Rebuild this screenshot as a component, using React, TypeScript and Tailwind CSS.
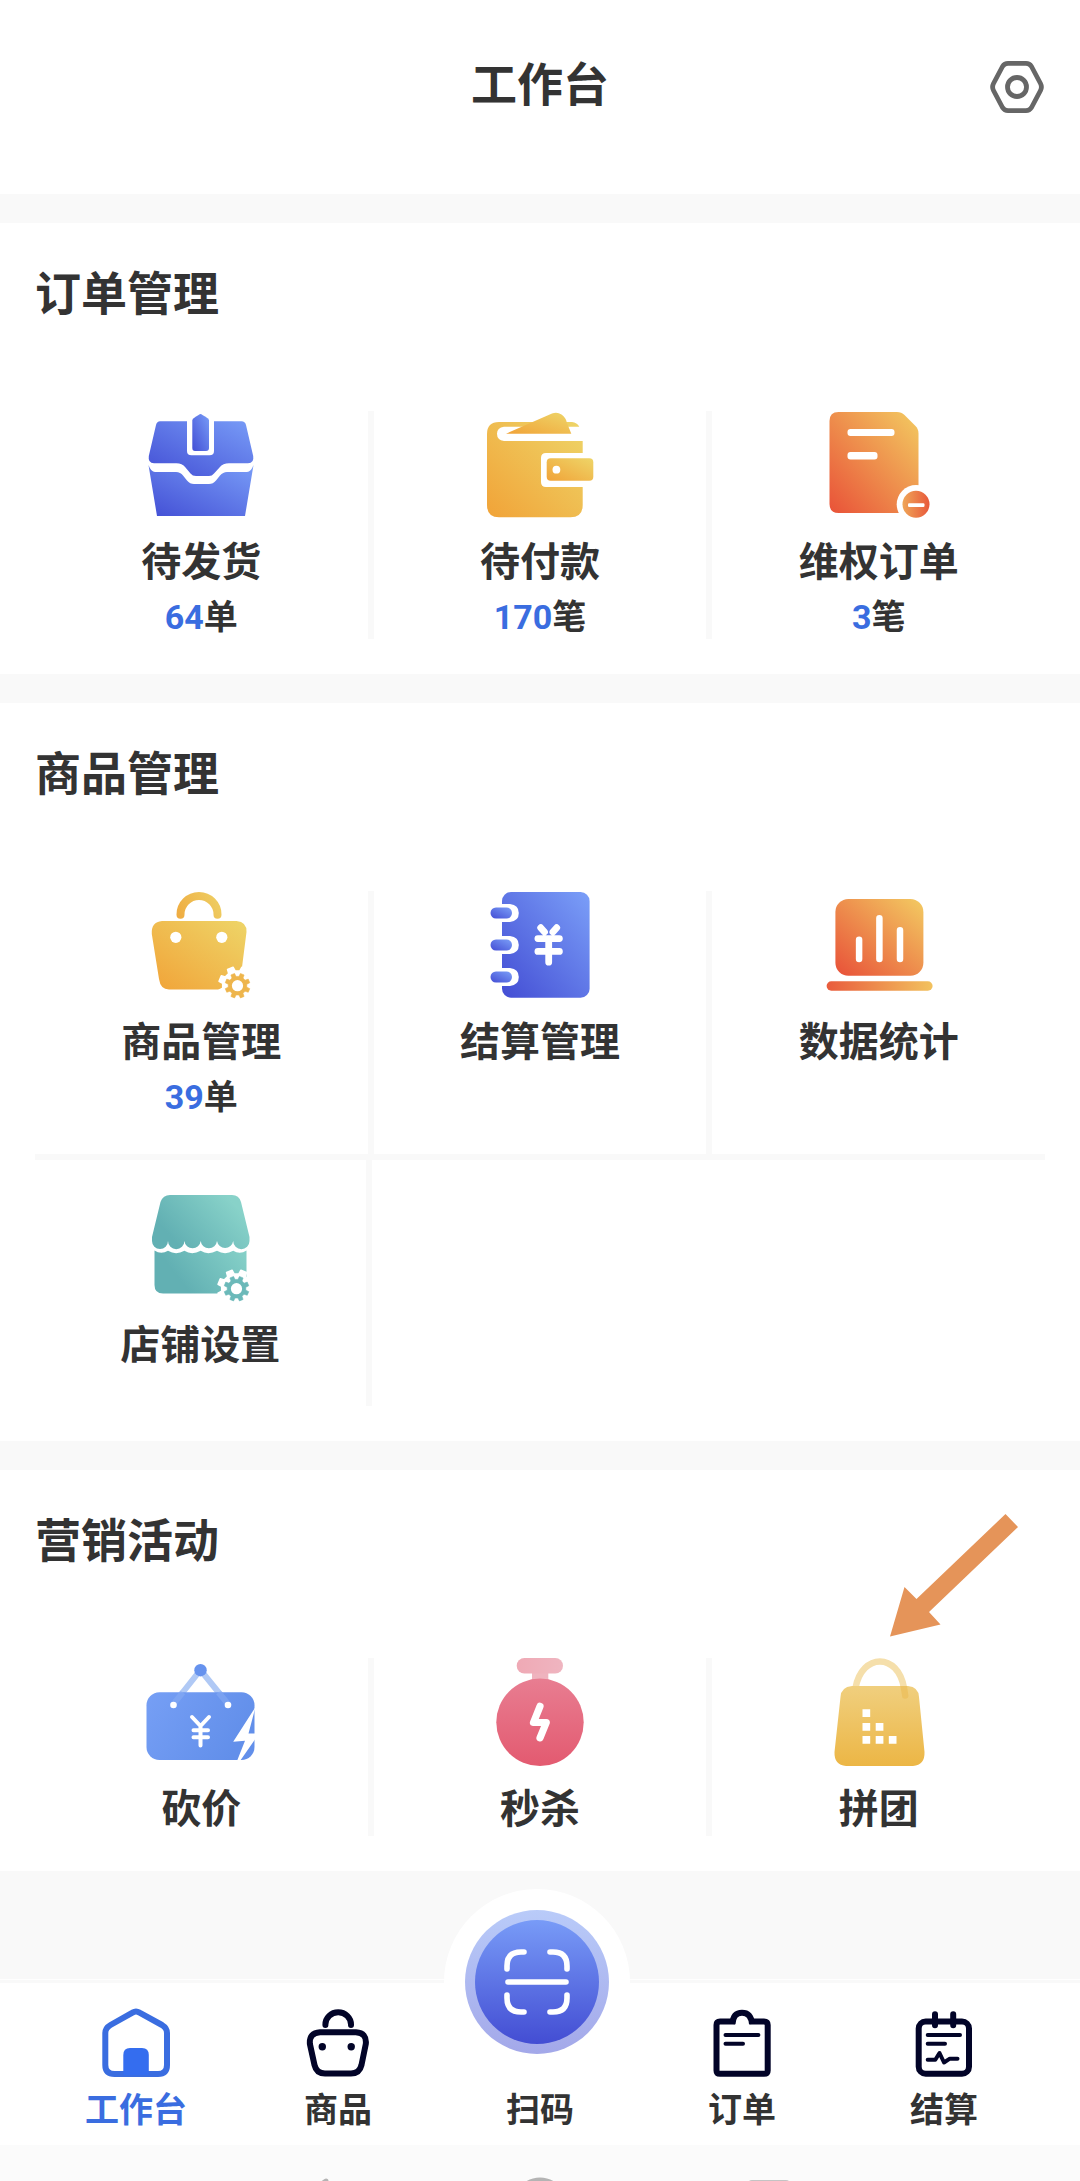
import type { ReactNode } from "react";

const FONT = "font-['Roboto','Noto_Sans_CJK_SC',sans-serif]";

function Gradient({ id, from, to, vertical = false }: { id: string; from: string; to: string; vertical?: boolean }) {
  return (
    <linearGradient id={id} x1="0" y1={vertical ? "0" : "1"} x2={vertical ? "0" : "1"} y2={vertical ? "1" : "0"}>
      <stop offset="0" stopColor={from} />
      <stop offset="1" stopColor={to} />
    </linearGradient>
  );
}

function Icon({ children }: { children: ReactNode }) {
  return (
    <svg viewBox="0 0 108 108" className="size-[108px] shrink-0 overflow-visible" aria-hidden="true">
      {children}
    </svg>
  );
}

/* Builds a closed cog outline around (cx, cy). */
function cog(cx: number, cy: number, outer: number, inner: number, teeth: number) {
  const step = (Math.PI * 2) / teeth;
  const points: string[] = [];
  for (let i = 0; i < teeth; i++) {
    const a = i * step + step / 2 - Math.PI / 2;
    const shape: [number, number][] = [
      [-0.3, inner],
      [-0.2, outer],
      [0.2, outer],
      [0.3, inner],
    ];
    for (const [offset, r] of shape) {
      points.push(`${(cx + Math.cos(a + offset * step) * r).toFixed(2)},${(cy + Math.sin(a + offset * step) * r).toFixed(2)}`);
    }
  }
  return points.join(" ");
}

function Cog({ fill }: { fill: string }) {
  return (
    <>
      <polygon points={cog(90.5, 94.7, 19, 15, 8)} fill="#fff" stroke="#fff" strokeWidth="1.5" strokeLinejoin="round" />
      <polygon points={cog(90.5, 94.7, 12.6, 9.4, 8)} fill={fill} stroke={fill} strokeWidth="0.6" strokeLinejoin="round" />
      <circle cx="90.5" cy="94.7" r="5.6" fill="#fff" />
    </>
  );
}

function BoxIcon() {
  return (
    <Icon>
      <defs>
        <Gradient id="box" from="#434fd5" to="#789cf7" />
      </defs>
      <path
        fill="url(#box)"
        d="M13 10.3H40V40Q40 44.3 44.5 44.3H62.5Q67 44.3 67 40V10.3H94.5Q98 10.3 99 14L106.2 45Q107.3 52.3 101 52.3H82Q76 52.3 72.5 56.5L67 62.5Q65 65 62 65H49Q45.5 65 43.5 62.5L38.5 56.5Q35 52.3 29.5 52.3H7Q.8 52.3 1.8 45L9 14Q10 10.3 13 10.3Z"
      />
      <path fill="url(#box)" d="M53.5 3Q54.5 3 61 7.5L62 9V37Q62 40 59 40H48Q45.3 40 45.3 37V9L46.3 7.5Q52.5 3 53.5 3Z" />
      <path
        fill="url(#box)"
        d="M1.5 54Q4 61 8 61H29Q33.5 61 36 64.5L40 69.5Q43 73 47 73H62Q66 73 69 69.5L73 64.5Q76 61 80 61H100Q104 61 106.5 54L98 105H10Z"
      />
    </Icon>
  );
}

function WalletIcon() {
  return (
    <Icon>
      <defs>
        <Gradient id="wallet" from="#f1a338" to="#eed568" />
      </defs>
      <path
        fill="url(#wallet)"
        d="M13 11H86Q91 11.5 93.3 15.7H18Q11 16.5 11 22.8T18 30H96.7V42H60Q55 42 55 47V71Q55 76 60 76H96.7V94Q96.7 106.3 84.5 106.3H13Q1 106.3 1 94V23Q1 11 13 11Z"
      />
      <path fill="url(#wallet)" d="M20 22.7L66 2.6Q71 .7 75.5 3.5Q80 6.5 81 12L85.3 22.7Z" />
      <rect x="60.7" y="47.3" width="46.6" height="22.4" rx="4" fill="url(#wallet)" />
      <circle cx="70.4" cy="58.7" r="3.9" fill="#fff" />
    </Icon>
  );
}

function DisputeIcon() {
  return (
    <Icon>
      <defs>
        <Gradient id="dispute" from="#e95238" to="#f3cb61" />
        <linearGradient id="dispute-badge">
          <stop offset="0" stopColor="#efa658" />
          <stop offset="1" stopColor="#e8583a" />
        </linearGradient>
      </defs>
      <path fill="url(#dispute)" d="M13.5 1H72Q76.5 1 79.5 4L90.5 15Q93.5 18 93.5 22.5V102H13.5Q4.5 102 4.5 93V10Q4.5 1 13.5 1Z" />
      <rect x="22.5" y="18" width="47" height="7" rx="3" fill="#fff" />
      <rect x="22.5" y="41" width="30" height="7.5" rx="3" fill="#fff" />
      <circle cx="91" cy="93.3" r="19.3" fill="#fff" />
      <circle cx="91" cy="93.3" r="13.5" fill="url(#dispute-badge)" />
      <rect x="83" y="92.3" width="16.5" height="3.6" rx="1.2" fill="#fff" />
    </Icon>
  );
}

function BagIcon() {
  return (
    <Icon>
      <defs>
        <Gradient id="bag" from="#f1a338" to="#eed568" />
        <linearGradient id="bag-handle" gradientUnits="userSpaceOnUse" x1="30" y1="27" x2="74" y2="4">
          <stop offset="0" stopColor="#efab40" />
          <stop offset="1" stopColor="#eed065" />
        </linearGradient>
      </defs>
      <path d="M33.5 23.7V23.5A18.5 18.5 0 0 1 70.5 23.5V23.7" fill="none" stroke="url(#bag-handle)" strokeWidth="8" strokeLinecap="round" />
      <path fill="url(#bag)" d="M15 30H89.5Q100 31 99.5 41L93.5 88Q92 98.5 82 98.5H22Q13.5 98.5 12 88L4.8 43Q4 31 15 30Z" />
      <circle cx="28.8" cy="46.3" r="5.6" fill="#fff" />
      <circle cx="74.8" cy="46.3" r="5.6" fill="#fff" />
      <Cog fill="#eeb54c" />
    </Icon>
  );
}

function LedgerIcon() {
  return (
    <Icon>
      <defs>
        <Gradient id="ledger" from="#434dd4" to="#7b9ff8" />
      </defs>
      <rect x="16" y="1" width="87.6" height="105.7" rx="9" fill="url(#ledger)" />
      {[13, 45, 77].map((y) => (
        <g key={y}>
          <path fill="#fff" transform={`translate(0 ${y})`} d="M15 0H24Q32.8 1 32.8 9T24 18H15Z" />
          <rect x="4.5" y={y + 3.5} width="21.5" height="11" rx="5.5" fill="url(#ledger)" />
        </g>
      ))}
      <path d="M54.7 36.7L58.5 41M70.7 36.7L66.9 41M51.9 47.6H73.4M51.9 60.4H73.4M62.7 48V71.2" fill="none" stroke="#fff" strokeWidth="6.8" strokeLinecap="round" />
    </Icon>
  );
}

function ChartIcon() {
  return (
    <Icon>
      <defs>
        <Gradient id="chart" from="#e85038" to="#f3cb62" />
        <linearGradient id="chart-base">
          <stop offset="0" stopColor="#e95c3d" />
          <stop offset="1" stopColor="#f2c25e" />
        </linearGradient>
      </defs>
      <rect x="10.4" y="8" width="88" height="76.7" rx="13" fill="url(#chart)" />
      <path d="M34.1 48.8V68M54.4 27.2V68M75 39.2V68" stroke="#fff" strokeWidth="6.5" strokeLinecap="round" />
      <rect x="1.6" y="90.3" width="106" height="9.4" rx="4.7" fill="url(#chart-base)" />
    </Icon>
  );
}

function ShopIcon() {
  return (
    <Icon>
      <defs>
        <linearGradient id="shop" gradientUnits="userSpaceOnUse" x1="40" y1="60" x2="92" y2="14">
          <stop offset="0" stopColor="#62b0b3" />
          <stop offset="1" stopColor="#88d2c9" />
        </linearGradient>
        <linearGradient id="shop-base" gradientUnits="userSpaceOnUse" x1="42" y1="96" x2="94" y2="56">
          <stop offset="0" stopColor="#62b0b3" />
          <stop offset="1" stopColor="#84cfc7" />
        </linearGradient>
      </defs>
      <path
        fill="url(#shop)"
        d="M24 1H86Q93 1 95 8L103.5 43V47A8 8 0 0 1 87.2 47A8.2 8.2 0 0 1 71 47A8.2 8.2 0 0 1 54.7 47A8.2 8.2 0 0 1 38.4 47A8.2 8.2 0 0 1 22 47A8 8 0 0 1 6 47V43L14.5 8Q17 1 24 1Z"
      />
      <path
        fill="url(#shop-base)"
        d="M8.5 56.5Q15 61 22 56.8Q30 61.5 38.4 56.8Q46 61.5 54.7 56.8Q62 61.5 71 56.8Q79 61.5 87.2 56.8Q94 61 100.5 56.5V99.5H17Q8.5 99.5 8.5 91Z"
      />
      <Cog fill="#6bb9b9" />
    </Icon>
  );
}

function BargainIcon() {
  return (
    <Icon>
      <defs>
        <linearGradient id="bargain" x1="0" y1="0" x2="1" y2=".4">
          <stop offset="0" stopColor="#769ff5" />
          <stop offset="1" stopColor="#628fea" />
        </linearGradient>
      </defs>
      <path d="M26.5 46L53.5 12L81 46" fill="none" stroke="#b0c9f5" strokeWidth="6" />
      <rect x="-.5" y="34.3" width="108" height="67.7" rx="13" fill="url(#bargain)" />
      <path d="M35.800 34.300L26.500 46M71.500 34.300L81 46" fill="none" stroke="#8aaef3" strokeOpacity=".5" strokeWidth="6" />
      <circle cx="53.5" cy="12.2" r="6.2" fill="#6692ee" />
      <circle cx="26.5" cy="47" r="3.3" fill="#fff" />
      <circle cx="81" cy="47" r="3.3" fill="#fff" />
      <path d="M45 59L53.5 68L62 59M53.5 68V87.5M46.5 72.2H61M46.5 79.2H61" fill="none" stroke="#fff" strokeWidth="4" strokeLinecap="round" strokeLinejoin="round" />
      <path fill="#fff" d="M108.5 49L86.2 83.7L98 82.7L90 103L93 103L109 80V75.5H101.5Z" />
    </Icon>
  );
}

function FlashIcon() {
  return (
    <Icon>
      <defs>
        <Gradient id="flash" from="#e87d91" to="#e35a70" vertical />
        <linearGradient id="flash-cap">
          <stop offset="0" stopColor="#efa9b5" />
          <stop offset="1" stopColor="#efb5c0" />
        </linearGradient>
      </defs>
      <rect x="46" y="12" width="16.3" height="12" fill="#efb3be" />
      <rect x="30.7" y="0" width="46.3" height="15.5" rx="7.7" fill="url(#flash-cap)" />
      <circle cx="54" cy="64.3" r="43.7" fill="url(#flash)" />
      <path d="M54 48.3L47.5 64.5H60.3L54 79.8" fill="none" stroke="#fff" strokeWidth="7.2" strokeLinecap="round" strokeLinejoin="round" />
    </Icon>
  );
}

function GroupIcon() {
  return (
    <Icon>
      <defs>
        <Gradient id="group" from="#f0cf7e" to="#ecb645" vertical />
      </defs>
      <path d="M30.5 30C37-5.500 73-5.500 79 30" fill="none" stroke="#f5dfab" strokeWidth="6.5" />
      <path fill="url(#group)" d="M27 28H83Q93.5 29 94 39L99.5 94Q100 107 88 108H21Q9 107 9.5 94L15.5 39Q16 29 27 28Z" />
      <path d="M75.300 28H82L83.400 37.500A3.200 3.200 0 0 1 77 37.500Z" fill="#ecbf5c" fillOpacity=".8" />
      <path
        fill="#fff"
        d="M37.5 51.3h7.7v7.7h-7.7zM37.5 65h7.7v7.7h-7.7zM50.7 65h7.7v7.7h-7.7zM37.5 78h7.7v7.7h-7.7zM50.7 78h7.7v7.7h-7.7zM63.8 78h7.7v7.7h-7.7z"
      />
    </Icon>
  );
}

type EntryData = { label: string; icon: ReactNode; count?: string; unit?: string };

function Entry({ label, icon, count, unit }: EntryData) {
  return (
    <button type="button" className="flex w-full flex-col items-center">
      {icon}
      <span className="mt-[18px] text-[40px] leading-[52px] whitespace-nowrap">{label}</span>
      {count && (
        <span className="mt-1.5 text-[34px] leading-[44px]">
          <span className="text-[#3a6de0]">{count}</span>
          {unit}
        </span>
      )}
    </button>
  );
}

function EntryRow({ entries, padded = false }: { entries: EntryData[]; padded?: boolean }) {
  return (
    <div className="flex">
      {entries.map((entry, i) => (
        <div key={entry.label} className="contents">
          {i > 0 && <div className="w-1.5 shrink-0 bg-[#f9f9f9]" />}
          <div className={padded ? "flex-1 pb-[35px]" : "flex-1"}>
            <Entry {...entry} />
          </div>
        </div>
      ))}
    </div>
  );
}

function Section({ title, children }: { title: string; children: ReactNode }) {
  return (
    <section className="relative bg-white px-[35px] pt-9 pb-[35px]">
      <h2 className="mb-[82px] text-[46px] leading-[70px]">{title}</h2>
      {children}
    </section>
  );
}

function TabIcon({ children, color = "#020428" }: { children: ReactNode; color?: string }) {
  return (
    <svg viewBox="0 0 72 70" className="h-[70px] w-[72px]" fill="none" stroke={color} strokeWidth="6" strokeLinecap="round" strokeLinejoin="round" aria-hidden="true">
      {children}
    </svg>
  );
}

function Tab({ label, icon, active = false }: { label: string; icon: ReactNode; active?: boolean }) {
  return (
    <button type="button" aria-current={active ? "page" : undefined} className={active ? "flex flex-1 flex-col items-center text-[#3a6de0]" : "flex flex-1 flex-col items-center"}>
      {icon}
      <span className="mt-2 text-[34px] leading-[48px]">{label}</span>
    </button>
  );
}

function ScanIcon() {
  return (
    <svg viewBox="0 0 192 186" className="absolute -top-[119px] left-1/2 h-[186px] w-[192px] -translate-x-1/2" aria-hidden="true">
      <defs>
        <Gradient id="scan" from="#789bf7" to="#434dd3" vertical />
        <Gradient id="scan-ring" from="#b9cbf9" to="#a3a8e9" vertical />
      </defs>
      <circle cx="93" cy="93" r="93" fill="#fff" />
      <circle cx="93" cy="93" r="72" fill="url(#scan-ring)" />
      <circle cx="93" cy="93" r="62" fill="url(#scan)" />
      <path
        d="M63 80V77Q63 63 77 63H80M106 63H109Q123 63 123 77V80M63 106V109Q63 123 77 123H80M106 123H109Q123 123 123 109V106M64 93H122"
        fill="none"
        stroke="#fff"
        strokeWidth="5.6"
        strokeLinecap="round"
      />
    </svg>
  );
}

export default function App() {
  return (
    <div className={`min-h-screen bg-[#f9f9f9] font-bold text-[#333] ${FONT}`}>
      <header className="grid grid-cols-[1fr_auto_1fr] items-start bg-white px-9 pt-[50px] pb-[74px]">
        <h1 className="col-start-2 text-[46px] leading-[70px]">工作台</h1>
        <button type="button" aria-label="设置" className="mt-2.5 justify-self-end">
          <svg viewBox="0 0 54 54" className="size-[54px]" fill="none" stroke="#666" strokeWidth="4.8" strokeLinejoin="round" aria-hidden="true">
            <path d="M18 3.4H36Q39.5 3.4 41.5 6.5L50.5 23.5Q52.3 27 50.5 30.5L41.5 47.5Q39.5 50.6 36 50.6H18Q14.5 50.6 12.5 47.5L3.5 30.5Q1.7 27 3.5 23.5L12.5 6.5Q14.5 3.4 18 3.4Z" />
            <circle cx="27" cy="27" r="9.5" />
          </svg>
        </button>
      </header>

      <main className="flex flex-col gap-[29px] pt-[29px] pb-[108px]">
        <Section title="订单管理">
          <EntryRow
            entries={[
              { label: "待发货", icon: <BoxIcon />, count: "64", unit: "单" },
              { label: "待付款", icon: <WalletIcon />, count: "170", unit: "笔" },
              { label: "维权订单", icon: <DisputeIcon />, count: "3", unit: "笔" },
            ]}
          />
        </Section>

        <Section title="商品管理">
          <EntryRow
            padded
            entries={[
              { label: "商品管理", icon: <BagIcon />, count: "39", unit: "单" },
              { label: "结算管理", icon: <LedgerIcon /> },
              { label: "数据统计", icon: <ChartIcon /> },
            ]}
          />
          <div className="border-t-6 border-[#f9f9f9]">
            <div className="w-1/3 border-r-6 border-[#f9f9f9] pt-[34px] pb-[34px]">
              <Entry label="店铺设置" icon={<ShopIcon />} />
            </div>
          </div>
        </Section>

        <Section title="营销活动">
          <EntryRow
            entries={[
              { label: "砍价", icon: <BargainIcon /> },
              { label: "秒杀", icon: <FlashIcon /> },
              { label: "拼团", icon: <GroupIcon /> },
            ]}
          />
          <svg viewBox="0 0 128 124" className="absolute top-11 right-[62px] h-[124px] w-32" aria-hidden="true">
            <path fill="#e59459" d="M115.5 0L128 13L39 98L50.5 110.5L0 122.5L14.5 73L26.5 85Z" />
          </svg>
        </Section>
      </main>

      <nav aria-label="主导航" className="border-t border-white pt-[3px]">
        <div className="flex bg-white px-[35px] pt-[25px] pb-[11px]">
          <Tab
            active
            label="工作台"
            icon={
              <TabIcon color="#3a6de0">
                <path d="M32.5 4.6Q36 2.5 39.5 4.6L62 17Q67 20 67 25V57Q67 66 58 66H14.5Q5.3 66 5.3 57V25Q5.3 20 10.5 17Z" />
                <path d="M23.3 67V47Q23.3 40 30 40H42Q48.8 40 48.8 47V67Z" fill="#346def" stroke="none" />
              </TabIcon>
            }
          />
          <Tab
            label="商品"
            icon={
              <TabIcon>
                <path d="M23.4 17V16.5A12.8 12.3 0 0 1 49 16.5V17M18 24.3H54Q65 25 63.8 36L59.5 57Q57.5 65.5 49 65.5H23Q14.5 65.5 12.5 57L7.9 36Q7 25 18 24.3Z" />
                <circle cx="20.3" cy="38.7" r="3.7" fill="#020428" stroke="none" />
                <circle cx="49.2" cy="38.7" r="3.7" fill="#020428" stroke="none" />
              </TabIcon>
            }
          />
          <div className="relative flex flex-1">
            <ScanIcon />
            <Tab label="扫码" icon={<span className="h-[70px]" />} />
          </div>
          <Tab
            label="订单"
            icon={
              <TabIcon>
                <path strokeLinecap="butt" d="M29 13.5H14Q10.5 13.5 10.5 17V62.5Q10.5 65.8 14 65.8H58Q61.7 65.8 61.7 62.5V17Q61.7 13.5 58 13.5H43.5" />
                <path strokeLinecap="butt" d="M26.5 16Q27 4.8 36 4.8T46 16" />
                <path strokeWidth="4" d="M19.5 27H52.4M19.5 35.7H37" />
              </TabIcon>
            }
          />
          <Tab
            label="结算"
            icon={
              <TabIcon>
                <rect x="10.7" y="13.5" width="50.3" height="52.2" rx="7" />
                <path d="M27 6.3V17.3M45.2 6.3V17.3" />
                <path strokeWidth="4" d="M19.7 27H52M19.7 35.7H37M19.7 51.7H27.3L31.5 45L36 54.5L41.8 50.7H49.5" />
              </TabIcon>
            }
          />
        </div>
      </nav>

      <div className="flex h-9 items-start justify-center gap-[175px] overflow-hidden bg-[#fbfbfb] pt-8" aria-hidden="true">
        <svg viewBox="0 0 54 54" className="size-[54px] shrink-0" fill="none" stroke="#b4b4b4" strokeWidth="5" strokeLinejoin="round">
          <path d="M42 4L10 27L42 50Z" />
        </svg>
        <svg viewBox="0 0 54 54" className="size-[54px] shrink-0" fill="none" stroke="#b4b4b4" strokeWidth="5">
          <circle cx="27" cy="27" r="24" />
        </svg>
        <svg viewBox="0 0 54 54" className="size-[54px] shrink-0" fill="none" stroke="#c4c4c4" strokeWidth="4">
          <rect x="7" y="5" width="40" height="40" rx="3" />
        </svg>
      </div>
    </div>
  );
}
